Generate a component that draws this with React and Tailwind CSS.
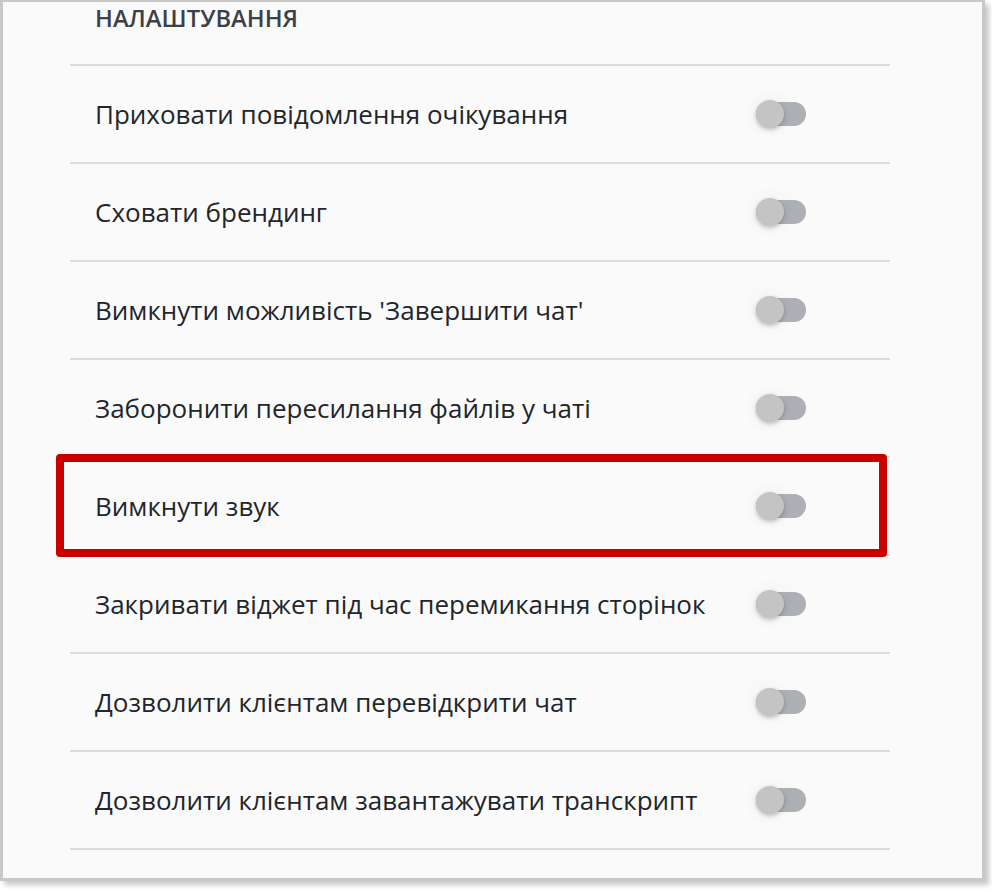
const rows = [
  'Приховати повідомлення очікування',
  'Сховати брендинг',
  "Вимкнути можливість 'Завершити чат'",
  'Заборонити пересилання файлів у чаті',
  'Вимкнути звук',
  'Закривати віджет під час перемикання сторінок',
  'Дозволити клієнтам перевідкрити чат',
  'Дозволити клієнтам завантажувати транскрипт',
];

const Toggle = () => (
  <div className="relative w-[50px] h-[28px] flex items-center">
    {/* faint ripple halo */}
    <div className="absolute left-[-14px] top-[-14px] w-[56px] h-[56px] rounded-full bg-[radial-gradient(circle,rgba(0,0,0,0.035)_0%,rgba(0,0,0,0)_70%)]" />
    <div className="w-[50px] h-[24px] rounded-full bg-[#adb0b5]" />
    <div className="absolute left-0 top-0 w-[28px] h-[28px] rounded-full bg-[#c4c4c4] shadow-[0_2px_4px_rgba(0,0,0,0.22)]" />
  </div>
);

export default function App() {
  return (
    <div className="w-[992px] h-[892px] bg-white font-['Open_Sans',sans-serif]">
      <div className="w-[985px] h-[881px] bg-[#fafafa] border-[3px] border-t-[2px] border-[#c8c8c8] shadow-[4px_4px_5px_rgba(0,0,0,0.22)]">
        <div className="ml-[67px] w-[820px]">
          {/* Heading */}
          <div className="h-[64px] border-b-2 border-[#dcdcdc] pl-[25px]">
            <h2 className="text-[23.8px] leading-[32px] font-semibold text-[#3c4148]">
              НАЛАШТУВАННЯ
            </h2>
          </div>

          {rows.map((label, i) => (
            <div
              key={label}
              className="relative h-[98px] border-b-2 border-[#dcdcdc] flex items-center justify-between pl-[25px] pr-[84px]"
            >
              <span className="text-[26px] leading-[34px] text-[#22262b]">{label}</span>
              <Toggle />
              {i === 4 && (
                <div className="absolute left-[-14px] right-[3px] top-[-4px] bottom-[-3px] border-[8px] border-[#c80000] rounded-[4px] pointer-events-none" />
              )}
            </div>
          ))}
        </div>
      </div>
    </div>
  );
}
